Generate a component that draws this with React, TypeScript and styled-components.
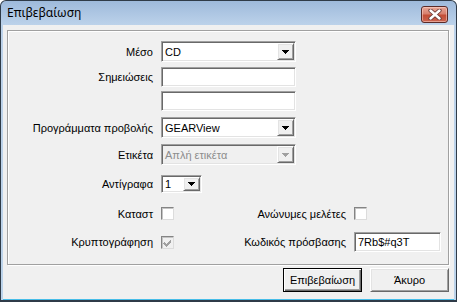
import React from 'react'
import styled, { createGlobalStyle, css } from 'styled-components'

const GlobalStyle = createGlobalStyle`
  html, body { margin: 0; padding: 0; background: #fff; }
  body {
    font-family: "Liberation Sans", Arial, sans-serif;
    font-size: 11px;
    color: #000;
  }
`

// classic 3D edges
const sunken = css`
  border: 1px solid;
  border-color: #a0a0a0 #fff #fff #a0a0a0;
  box-shadow: inset 1px 1px 0 #696969, inset -1px -1px 0 #e3e3e3;
`

const raised = css`
  border: 1px solid;
  border-color: #fff #696969 #696969 #fff;
  box-shadow: inset 1px 1px 0 #e3e3e3, inset -1px -1px 0 #a0a0a0;
`

const Window = styled.div`
  box-sizing: border-box;
  width: 457px;
  height: 302px;
  border: 1px solid #2f3b48;
  border-bottom-width: 2px;
  border-radius: 6px 6px 0 0;
  background: linear-gradient(#9ebadb, #bcd2ea 24px, #bcd3ea);
  display: flex;
  flex-direction: column;
  overflow: hidden;
`

const TitleBar = styled.div`
  height: 24px;
  display: flex;
  align-items: center;
  padding: 0 8px 0 6px;
  font-family: "Noto Sans", "Open Sans", sans-serif;
  font-size: 12px;
  color: #000;
`

const Title = styled.span`
  flex: 1;
  margin-top: -1px;
`

const CloseButton = styled.div`
  box-sizing: border-box;
  width: 27px;
  height: 17px;
  margin-top: 2px;
  border: 1px solid #5b2a27;
  border-radius: 3px;
  background: linear-gradient(#e8a798, #d7806e 45%, #c34d36 55%, #cb6450);
  box-shadow: inset 0 0 0 1px rgba(255, 220, 210, 0.5);
  display: flex;
  align-items: center;
  justify-content: center;
`

const Client = styled.div`
  flex: 1;
  margin: 0 2px;
  background: #f0f0f0;
  border-bottom: 1px solid #47bde8;
  padding: 5px 5px 0 4px;
  display: flex;
  flex-direction: column;
`

const GroupBox = styled.div`
  box-sizing: border-box;
  height: 235px;
  border: 1px solid #a0a0a0;
  box-shadow: inset 1px 1px 0 #fff, 1px 1px 0 #fff;
  padding: 0 7px 0 0;
  display: flex;
  flex-direction: column;
`

const Row = styled.div<{ $top: number }>`
  display: grid;
  grid-template-columns: 145px auto;
  column-gap: 8px;
  align-items: center;
  justify-items: start;
  margin-top: ${p => p.$top}px;
`

const PairRow = styled.div<{ $top: number }>`
  display: grid;
  grid-template-columns: 145px 13px 1fr 87px;
  column-gap: 8px;
  align-items: center;
  margin-top: ${p => p.$top}px;
`

const Label = styled.span`
  justify-self: end;
  text-align: right;
  white-space: nowrap;
`

const Combo = styled.div<{ $width: number; $height: number; $disabled?: boolean }>`
  box-sizing: border-box;
  width: ${p => p.$width}px;
  height: ${p => p.$height}px;
  ${sunken}
  padding: 1px;
  background: ${p => (p.$disabled ? '#f0f0f0' : '#fff')};
  color: ${p => (p.$disabled ? '#8d8d8d' : '#000')};
  display: flex;
  align-items: stretch;
`

const ComboText = styled.span`
  flex: 1;
  padding-left: 2px;
  display: flex;
  align-items: center;
  white-space: nowrap;
  overflow: hidden;
`

const ArrowButton = styled.div`
  box-sizing: border-box;
  width: 17px;
  ${raised}
  background: #f0f0f0;
  display: flex;
  align-items: center;
  justify-content: center;
`

const Edit = styled.div<{ $width: number }>`
  box-sizing: border-box;
  width: ${p => p.$width}px;
  height: 20px;
  ${sunken}
  background: #fff;
  padding: 0 3px;
  display: flex;
  align-items: center;
  white-space: nowrap;
`

const CheckBox = styled.div<{ $disabled?: boolean }>`
  box-sizing: border-box;
  width: 13px;
  height: 13px;
  border: 1px solid;
  border-color: #848484 #dcdcdc #dcdcdc #848484;
  box-shadow: inset 1px 1px 0 #c4c4c4;
  background: ${p => (p.$disabled ? '#f0f0f0' : '#fff')};
  display: flex;
  align-items: center;
  justify-content: center;
`

const Footer = styled.div`
  display: flex;
  justify-content: flex-end;
  gap: 8px;
  margin-top: 3px;
`

const Button = styled.div<{ $default?: boolean }>`
  box-sizing: border-box;
  width: 79px;
  height: 24px;
  background: #f0f0f0;
  display: flex;
  align-items: center;
  justify-content: center;
  ${p =>
    p.$default
      ? css`
          border: 1px solid #000;
          box-shadow: inset 1px 1px 0 #fff, inset -1px -1px 0 #696969, inset -2px -2px 0 #a0a0a0;
        `
      : raised}
`

const Arrow = ({ color = '#000' }: { color?: string }) => (
  <svg width="7" height="4" viewBox="0 0 7 4" shapeRendering="crispEdges">
    <path d="M0 0h7v1h-1v1h-1v1h-1v1h-1v-1h-1v-1h-1v-1h-1z" fill={color} />
  </svg>
)

const Select = ({ value, width, height = 21, disabled }: { value: string; width: number; height?: number; disabled?: boolean }) => (
  <Combo $width={width} $height={height} $disabled={disabled}>
    <ComboText>{value}</ComboText>
    <ArrowButton>
      <Arrow color={disabled ? '#a0a0a0' : '#000'} />
    </ArrowButton>
  </Combo>
)

const Check = () => (
  <svg width="9" height="9" viewBox="0 0 9 9" shapeRendering="crispEdges">
    <path d="M1 4h1v1h1v1h1v-1h1v-1h1v-1h1v-1h1v3h-1v1h-1v1h-1v1h-1v1h-1v-1h-1v-1h-1v-1h-1z" fill="#a0a0a0" />
  </svg>
)

const CloseGlyph = () => (
  <svg width="14" height="11" viewBox="0 0 14 11">
    <path d="M2.5 1.5 L11.5 9.5 M11.5 1.5 L2.5 9.5" stroke="#6b3a36" strokeWidth="4.2" strokeLinecap="round" />
    <path d="M2.5 1.5 L11.5 9.5 M11.5 1.5 L2.5 9.5" stroke="#fff" strokeWidth="2.4" strokeLinecap="round" />
  </svg>
)

export default function App() {
  return (
    <>
      <GlobalStyle />
      <Window>
        <TitleBar>
          <Title>Επιβεβαίωση</Title>
          <CloseButton>
            <CloseGlyph />
          </CloseButton>
        </TitleBar>
        <Client>
          <GroupBox>
            <Row $top={10}>
              <Label>Μέσο</Label>
              <Select value="CD" width={135} />
            </Row>
            <Row $top={5}>
              <Label>Σημειώσεις</Label>
              <Edit $width={135} />
            </Row>
            <Row $top={4}>
              <Label />
              <Edit $width={135} />
            </Row>
            <Row $top={6}>
              <Label>Προγράμματα προβολής</Label>
              <Select value="GEARView" width={135} />
            </Row>
            <Row $top={6}>
              <Label>Ετικέτα</Label>
              <Select value="Απλή ετικέτα" width={135} disabled />
            </Row>
            <Row $top={10}>
              <Label>Αντίγραφα</Label>
              <Select value="1" width={41} height={18} />
            </Row>
            <PairRow $top={14}>
              <Label>Καταστ</Label>
              <CheckBox />
              <Label>Ανώνυμες μελέτες</Label>
              <CheckBox />
            </PairRow>
            <PairRow $top={12}>
              <Label>Κρυπτογράφηση</Label>
              <CheckBox $disabled>
                <Check />
              </CheckBox>
              <Label>Κωδικός πρόσβασης</Label>
              <Edit $width={87}>7Rb$#q3T</Edit>
            </PairRow>
          </GroupBox>
          <Footer>
            <Button $default>Επιβεβαίωση</Button>
            <Button>Άκυρο</Button>
          </Footer>
        </Client>
      </Window>
    </>
  )
}
